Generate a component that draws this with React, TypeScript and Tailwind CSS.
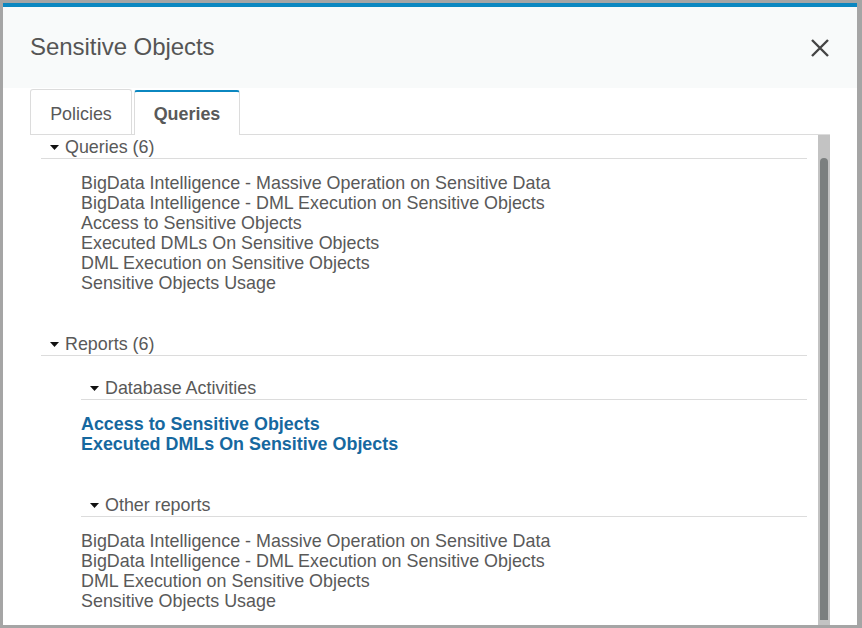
import React from "react";

const Tri = () => (
  <svg width="9" height="5" viewBox="0 0 9 5" className="shrink-0">
    <path d="M0 0 L9 0 L4.5 5 Z" fill="#111" />
  </svg>
);

const Header = ({ label, className = "" }: { label: string; className?: string }) => (
  <div className={`flex items-center pl-[9px] pt-[2px] pb-[1px] leading-[20px] border-b border-[#dcdcdc] ${className}`}>
    <Tri />
    <span className="ml-[6px]">{label}</span>
  </div>
);

const queries = [
  "BigData Intelligence - Massive Operation on Sensitive Data",
  "BigData Intelligence - DML Execution on Sensitive Objects",
  "Access to Sensitive Objects",
  "Executed DMLs On Sensitive Objects",
  "DML Execution on Sensitive Objects",
  "Sensitive Objects Usage",
];

const other = [
  "BigData Intelligence - Massive Operation on Sensitive Data",
  "BigData Intelligence - DML Execution on Sensitive Objects",
  "DML Execution on Sensitive Objects",
  "Sensitive Objects Usage",
];

export default function App() {
  return (
    <div
      className="w-[862px] h-[628px] bg-[#a5a5a5] pt-[3px] pl-[3px] pr-[5px] pb-[3px] text-[#595959]"
      style={{ fontFamily: '"Liberation Sans", Arial, sans-serif' }}
    >
      <div className="h-full bg-white flex flex-col border-t-4 border-[#0b87c0] overflow-hidden">
        <div className="h-[81px] shrink-0 bg-[#f8fafa] flex items-center justify-between pl-[27px] pr-[28px]">
          <div className="text-[24px] leading-[28px] pb-[2px] text-[#555] tracking-[-0.05px]">Sensitive Objects</div>
          <svg width="18" height="18" viewBox="0 0 18 18">
            <path d="M1 1 L17 17 M17 1 L1 17" stroke="#444" strokeWidth="2.4" />
          </svg>
        </div>
        <div className="shrink-0 mx-[27px] h-[47px] flex items-end border-b border-[#dcdcdc] text-[17.9px]">
          <div className="w-[102px] h-[45px] pt-[5px] border border-b-0 border-[#dcdcdc] rounded-t-[3px] flex items-center justify-center">
            Policies
          </div>
          <div className="ml-[2px] w-[106px] h-[45px] pt-[1px] -mb-px relative bg-white border border-b-0 border-[#dcdcdc] border-t-2 border-t-[#0b87c0] rounded-t-[3px] flex items-center justify-center font-bold">
            Queries
          </div>
        </div>
        <div className="flex-1 min-h-0 mx-[27px] flex">
          <div className="flex-1 overflow-hidden pl-[11px] pr-[11px] text-[17.9px]">
            <Header label="Queries (6)" />
            <div className="ml-[40px] mt-[14px] leading-[20px]">
              {queries.map((q, i) => (
                <div key={i}>{q}</div>
              ))}
            </div>
            <Header label="Reports (6)" className="mt-[39px]" />
            <div className="ml-[40px]">
              <Header label="Database Activities" className="mt-[20px]" />
              <div className="mt-[14px] leading-[20px] font-bold text-[#16689f]">
                <div>Access to Sensitive Objects</div>
                <div>Executed DMLs On Sensitive Objects</div>
              </div>
              <Header label="Other reports" className="mt-[39px]" />
              <div className="mt-[14px] leading-[20px]">
                {other.map((q, i) => (
                  <div key={i}>{q}</div>
                ))}
              </div>
            </div>
          </div>
          <div className="w-[12px] bg-[#c3c3c3] flex flex-col px-[2px] pt-[23px] pb-[5px]">
            <div className="flex-1 bg-[#7b7f7f] rounded-t-full rounded-b-[4px]" />
          </div>
        </div>
      </div>
    </div>
  );
}
